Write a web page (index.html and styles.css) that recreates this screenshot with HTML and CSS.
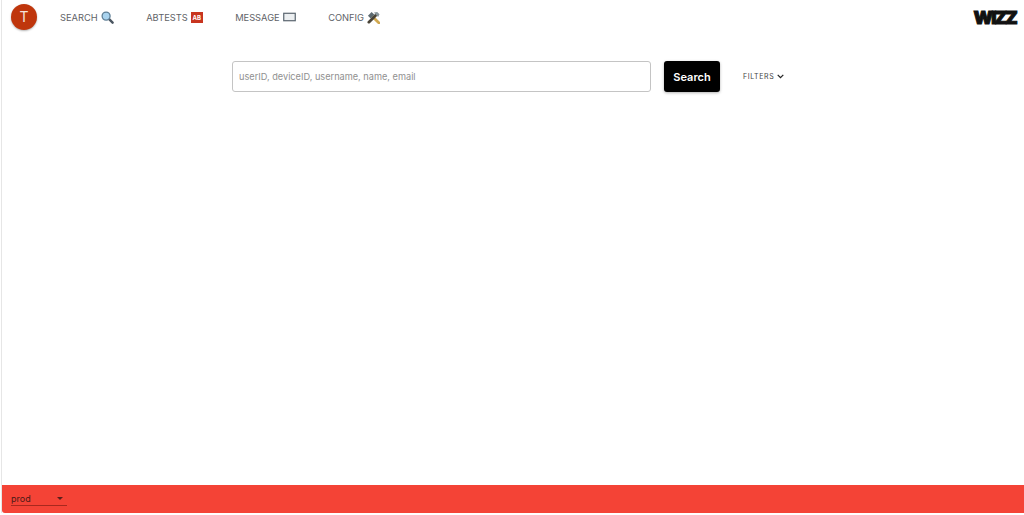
FILE: index.html
```html
<!DOCTYPE html>
<html lang="en">
<head>
  <meta charset="UTF-8" />
  <title>Backoffice</title>
  <link rel="stylesheet" href="styles.css">
</head>
<body>
  <div class="app">
    <header class="topbar">
      <div class="avatar">T</div>
      <nav class="nav">
        <a class="nav-item">SEARCH
          <svg class="icon" viewBox="0 0 14 14"><path d="M8.500 8.500l4 4" stroke="#4a5560" stroke-width="2.600" stroke-linecap="round"/><circle cx="5.500" cy="5.500" r="4.300" fill="#a9d3ee" stroke="#5f7f96" stroke-width="1.400"/></svg>
        </a>
        <a class="nav-item">ABTESTS
          <span class="ab-badge">AB</span>
        </a>
        <a class="nav-item">MESSAGE
          <svg class="icon icon-wide" viewBox="0 0 14 10"><rect x="0.800" y="1" width="12.400" height="8" fill="#eceff1" stroke="#5b6670" stroke-width="1.300"/></svg>
        </a>
        <a class="nav-item">CONFIG
          <svg class="icon" viewBox="0 0 14 14"><path d="M5 5l8 8" stroke="#d0a850" stroke-width="3" stroke-linecap="round"/><path d="M10 4l-8 8" stroke="#4a4438" stroke-width="3" stroke-linecap="round"/><path d="M1 5l4-4 3 3-4 4z" fill="#5d6a70"/><path d="M7.500 1.500l3.500-.5 2.500 2.500-1.500 3-2.500-2.500z" fill="#8a979d"/></svg>
        </a>
      </nav>
      <div class="logo">WIZZ</div>
    </header>

    <main class="content">
      <div class="search-row">
        <input class="search-input" type="text" placeholder="userID, deviceID, username, name, email" />
        <button class="search-btn">Search</button>
        <button class="filters-btn">FILTERS
          <svg class="chevron" viewBox="0 0 10 7"><path d="M1 1.200l4 4 4-4" fill="none" stroke="#222" stroke-width="1.800"/></svg>
        </button>
      </div>
    </main>

    <footer class="envbar">
      <div class="env-select">
        <span>prod</span>
        <span class="caret"></span>
      </div>
    </footer>
  </div>
</body>
</html>
```

FILE: styles.css
```css
html, body {
  margin: 0;
  padding: 0;
  height: 100%;
  background: #fff;
  font-family: Inter, "Open Sans", sans-serif;
}
.app {
  height: 513px;
  margin-left: 1px;
  border-left: 1px solid #e6e6e6;
  display: flex;
  flex-direction: column;
}
.topbar {
  display: flex;
  align-items: center;
  height: 34px;
  padding: 0 8px 0 9px;
}
.avatar {
  width: 26px;
  height: 26px;
  border-radius: 50%;
  background: #bf360c;
  color: #f5e3dc;
  font-size: 14px;
  line-height: 26px;
  text-align: center;
  box-shadow: 0 1px 2px rgba(0,0,0,0.3);
}
.nav {
  display: flex;
  align-items: center;
  margin-left: 23px;
  gap: 32.500px;
}
.nav-item {
  display: flex;
  align-items: center;
  gap: 3px;
  font-size: 9.300px;
  color: #5f6368;
}
.icon {
  width: 13px;
  height: 13px;
}
.icon-wide {
  height: 10px;
}
.ab-badge {
  width: 12px;
  height: 11px;
  background: #c8351f;
  color: #fff;
  font-size: 6px;
  font-weight: 700;
  line-height: 11px;
  text-align: center;
}
.logo {
  margin-left: auto;
  font-size: 18px;
  font-weight: 900;
  letter-spacing: -1.800px;
  color: #111;
  -webkit-text-stroke: 1px #111;
}
.content {
  flex: 1;
  padding: 27px 0 0 230px;
}
.search-row {
  display: flex;
  align-items: center;
}
.search-input {
  box-sizing: border-box;
  width: 419px;
  height: 31px;
  padding: 0 6px;
  border: 1px solid #c4c4c4;
  border-radius: 3px;
  font-family: inherit;
  font-size: 9.200px;
  outline: none;
}
.search-input::placeholder {
  color: #909090;
}
.search-btn {
  width: 56px;
  height: 31px;
  margin-left: 13px;
  background: #000;
  color: #fff;
  border: none;
  border-radius: 3px;
  font-family: inherit;
  font-size: 11px;
  font-weight: 600;
  box-shadow: 0 1px 3px rgba(0,0,0,0.3);
}
.filters-btn {
  display: flex;
  align-items: center;
  gap: 3px;
  margin-left: 23px;
  background: none;
  border: none;
  padding: 0;
  font-family: inherit;
  font-size: 7px;
  letter-spacing: 0.6px;
  color: #444;
}
.chevron {
  width: 7px;
  height: 5px;
}
.envbar {
  height: 28px;
  background: #f44336;
  border-bottom-left-radius: 3px;
  display: flex;
  align-items: center;
  padding-left: 9px;
  flex-shrink: 0;
}
.env-select {
  display: flex;
  align-items: center;
  justify-content: space-between;
  box-sizing: border-box;
  width: 56px;
  height: 14px;
  padding-right: 4px;
  border-bottom: 1px solid #a8281e;
  font-size: 9px;
  color: #4a1a16;
}
.caret {
  border-left: 3px solid transparent;
  border-right: 3px solid transparent;
  border-top: 3px solid #5a1f1a;
}
```
